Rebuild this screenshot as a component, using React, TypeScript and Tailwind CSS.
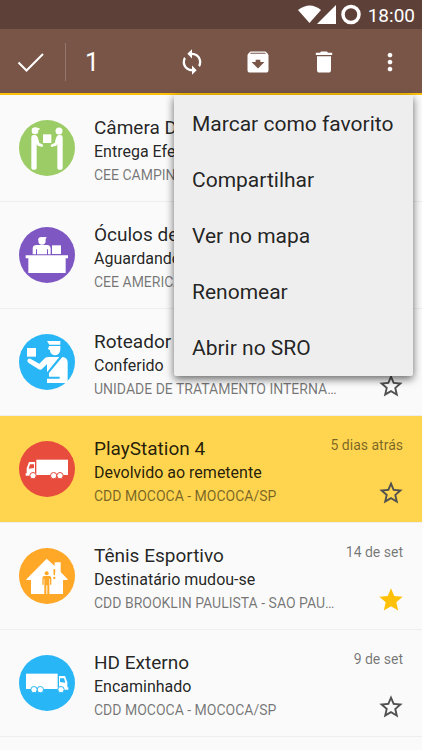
import { ReactNode, useState } from "react";
import { MdArchive, MdDelete, MdMoreVert, MdStar, MdStarBorder, MdSync } from "react-icons/md";

function Badge({ color, children }: { color: string; children: ReactNode }) {
  return (
    <svg viewBox="0 0 168 168" className="size-14 shrink-0" fill="#fff" aria-hidden="true">
      <circle cx="84" cy="84" r="84" fill={color} />
      {children}
    </svg>
  );
}

function HandOver() {
  return (
    <Badge color="#9ccc65">
      <circle cx="48" cy="33" r="10" />
      <path d="M38 30Q39 22 49 22L62 25L61 30L50 31Z" />
      <circle cx="120" cy="33" r="10.5" />
      <rect x="72" y="43" width="25" height="26" />
      <path d="M37 52Q37 45 44 45H49Q55 46 57 54L61 69L70 73Q75 77 70 81L56 77L53 72V143Q53 149 48 149H42Q37 149 37 143Z" />
      <path d="M131 52Q131 45 124 45H119Q113 46 111 54L107 69L98 73Q92 77 97 81L112 77L115 72V143Q115 149 120 149H126Q131 149 131 143Z" />
    </Badge>
  );
}

function Counter() {
  return (
    <Badge color="#7e57c2">
      <circle cx="69" cy="42" r="11" />
      <path d="M57 38Q58 29 69 31L83 30L79 38Z" />
      <path d="M41 82V64Q42 54 53 54H84Q95 55 95 65V82H87V67H84V82H54V67H51V82Z" />
      <rect x="99" y="55" width="27" height="26" />
      <path d="M20 85H147V94H140V138H28V94H20Z" />
    </Badge>
  );
}

function Inspector() {
  return (
    <Badge color="#29b6f6">
      <rect x="24" y="42" width="27" height="26" />
      <path d="M84 21H124V32H91Z" />
      <path d="M90 36H124V47Q122 63 107 64Q94 62 93 49L87 45Z" />
      <path d="M25 79Q27 72 34 74L61 89L79 71Q83 69 88 69H121L84 115V90L70 104Q65 109 59 106L29 87Q25 84 25 79Z" />
      <path d="M130 69Q145 71 146 84V141L143 147H84V134H122V128H90V117Z" />
    </Badge>
  );
}

function Truck({ color, mirrored = false }: { color: string; mirrored?: boolean }) {
  return (
    <Badge color={color}>
      <g transform={mirrored ? "translate(168 0) scale(-1 1)" : undefined}>
        <path d="M52 56H147V102H52Z" />
        <path d="M30 63H48V96H52V104H20V97H23V82Z" />
        <path d="M33 70H45V81L29 83Z" fill={color} />
        {[42, 104, 123].map((x) => (
          <circle key={x} cx={x} cy="104" r="9.5" stroke={color} strokeWidth="3" />
        ))}
      </g>
    </Badge>
  );
}

function House() {
  return (
    <Badge color="#ffa726">
      <path d="M83 32L107 54V43H125V72L146 94V96H132V138H36V96H22V94Z" />
      <g fill="#ffa726">
        <circle cx="83" cy="76" r="6" />
        <path d="M75 84H92Q97 85 97 91V110H93V92H91V138H85V112H82V138H76V92H74V110H70V91Q70 85 75 84Z" />
        <path d="M103 64H109L108 82H104Z" />
        <circle cx="106" cy="90" r="3.5" />
      </g>
    </Badge>
  );
}

type Parcel = {
  name: string;
  status: string;
  place: string;
  date: string;
  icon: ReactNode;
  selected?: boolean;
  starred?: boolean;
};

const parcels: Parcel[] = [
  { name: "Câmera Digital", status: "Entrega Efetuada", place: "CEE CAMPINAS", date: "", icon: <HandOver /> },
  { name: "Óculos de Sol", status: "Aguardando", place: "CEE AMERICANA", date: "", icon: <Counter /> },
  { name: "Roteador", status: "Conferido", place: "UNIDADE DE TRATAMENTO INTERNACIONAL", date: "", icon: <Inspector /> },
  { name: "PlayStation 4", status: "Devolvido ao remetente", place: "CDD MOCOCA - MOCOCA/SP", date: "5 dias atrás", icon: <Truck color="#e74c3c" />, selected: true },
  { name: "Tênis Esportivo", status: "Destinatário mudou-se", place: "CDD BROOKLIN PAULISTA - SAO PAULO/SP", date: "14 de set", icon: <House />, starred: true },
  { name: "HD Externo", status: "Encaminhado", place: "CDD MOCOCA - MOCOCA/SP", date: "9 de set", icon: <Truck color="#29b6f6" mirrored /> },
];

const menuItems = ["Marcar como favorito", "Compartilhar", "Ver no mapa", "Renomear", "Abrir no SRO"];

function StatusBar() {
  return (
    <div className="flex h-[29px] items-center justify-end bg-[#5d4037] pr-[7px] text-white">
      <svg viewBox="0 0 64 24" className="h-6 w-16" fill="#fff" aria-hidden="true">
        <path d="M0 7Q12 -2 23 7L11.500 20Z" />
        <path d="M38 2V21H19Z" />
        <circle cx="53" cy="11.500" r="8" fill="none" stroke="#fff" strokeWidth="3.500" />
      </svg>
      <span className="ml-[6px] pt-[2px] text-[19px] leading-7">18:00</span>
    </div>
  );
}

function ActionBar({ onMenu }: { onMenu: () => void }) {
  const button = "flex h-14 w-[66px] items-center justify-center";
  return (
    <header className="flex h-[66px] items-center border-b-2 border-[#ffc107] bg-[#795548] pt-px text-white">
      <button aria-label="Concluir" className="flex h-14 w-[65px] items-center pl-[17px]">
        <svg viewBox="0 0 28 28" className="size-7" fill="none" stroke="#fff" strokeWidth="2">
          <path d="M1.500 14.500L9.500 22.500L26 6" />
        </svg>
      </button>
      <span className="h-[38px] w-px bg-white/20" />
      <span className="ml-[19px] pt-[3px] text-[25px] leading-8">1</span>
      <div className="ml-auto -mr-px flex">
        <button aria-label="Atualizar" className={button}><MdSync size={28} /></button>
        <button aria-label="Arquivar" className={button}><MdArchive size={28} /></button>
        <button aria-label="Excluir" className={button}><MdDelete size={28} /></button>
        <button aria-label="Mais opções" onClick={onMenu} className={button}><MdMoreVert size={28} /></button>
      </div>
    </header>
  );
}

function ParcelRow({ parcel }: { parcel: Parcel }) {
  const [starred, setStarred] = useState(!!parcel.starred);
  return (
    <li
      className={`flex h-[107px] items-center border-b border-[#eeeeee] px-[19px] ${parcel.selected ? "bg-[#ffd54f]" : ""}`}
    >
      {parcel.icon}
      <div className="ml-[19px] min-w-0 flex-1 pt-[6px]">
        <div className="flex items-start justify-between">
          <h2 className="text-[19px] leading-6 text-black/87">{parcel.name}</h2>
          <span className="text-sm leading-4 text-black/54">{parcel.date}</span>
        </div>
        <div className="flex items-end">
          <div className="min-w-0 flex-1">
            <p className="truncate text-base leading-6 text-black/87">{parcel.status}</p>
            <p className="truncate text-sm leading-[22px] text-black/54">{parcel.place}</p>
          </div>
          <button
            aria-label="Favorito"
            aria-pressed={starred}
            onClick={() => setStarred(!starred)}
            className={`-mr-[2px] flex w-[65px] justify-end ${starred ? "text-[#ffc107]" : "text-[#505050]"}`}
          >
            {starred ? <MdStar size={28} /> : <MdStarBorder size={28} />}
          </button>
        </div>
      </div>
    </li>
  );
}

export default function App() {
  const [open, setOpen] = useState(true);
  return (
    <div className="min-h-screen bg-[#fafafa] font-[Roboto,sans-serif]">
      <StatusBar />
      <ActionBar onMenu={() => setOpen(!open)} />
      <main className="relative">
        <ul>
          {parcels.map((p) => (
            <ParcelRow key={p.name} parcel={p} />
          ))}
        </ul>
        {open && (
          <div
            role="menu"
            className="absolute top-0 right-[9px] w-[239px] rounded-b-[2px] bg-[#eeeeee] pb-px shadow-[0_3px_8px_rgba(0,0,0,0.6)]"
          >
            {menuItems.map((item) => (
              <button key={item} role="menuitem" className="block h-14 w-full pt-1 pl-[18px] text-left text-[21px] text-black/87">
                {item}
              </button>
            ))}
          </div>
        )}
      </main>
    </div>
  );
}
